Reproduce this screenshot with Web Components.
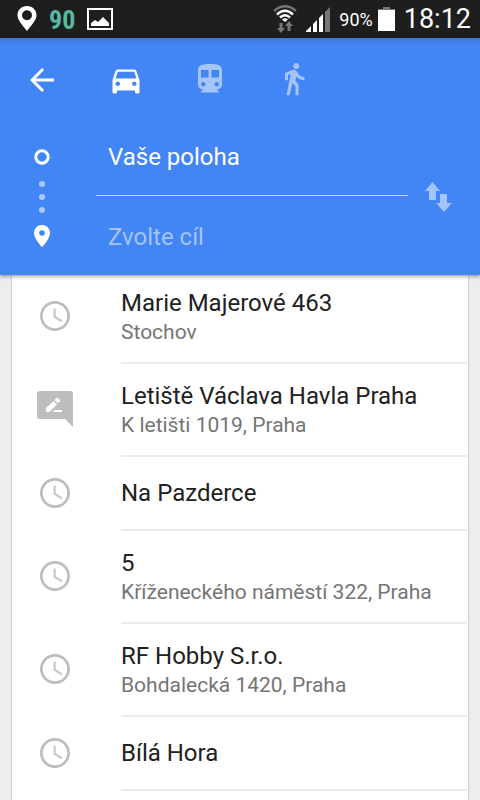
<!DOCTYPE html>
<html lang="cs">
<head>
<meta charset="utf-8">
<meta name="viewport" content="width=device-width, initial-scale=1">
<title>Trasa</title>
<style>
  html, body { margin: 0; }
  body { font-family: Roboto, "Noto Sans", sans-serif; background: #ededed; color: #212121; }
</style>
</head>
<body>
<directions-app></directions-app>
<script>
const ICONS = {
  back: ['0 0 24 24', '<path d="M20 11H7.830l5.590-5.590L12 4l-8 8 8 8 1.410-1.410L7.830 13H20v-2z"/>'],
  car: ['0 0 24 24', '<path d="M18.920 6.010C18.720 5.420 18.160 5 17.500 5h-11c-.66 0-1.210.42-1.420 1.010L3 12v8c0 .55.45 1 1 1h1c.55 0 1-.45 1-1v-1h12v1c0 .55.45 1 1 1h1c.55 0 1-.45 1-1v-8l-2.080-5.990zM6.500 16c-.83 0-1.500-.67-1.500-1.500S5.670 13 6.500 13s1.500.67 1.500 1.500S7.330 16 6.500 16zm11 0c-.83 0-1.500-.67-1.500-1.500s.67-1.500 1.500-1.500 1.500.67 1.500 1.500-.67 1.500-1.500 1.500zM5 11l1.500-4.500h11L19 11H5z"/>'],
  train: ['0 .7 24 24', '<path d="M12 2c-4.420 0-8 .5-8 4v9.500C4 17.430 5.570 19 7.500 19L6 20.500v.5h12v-.5L16.500 19c1.930 0 3.500-1.570 3.500-3.500V6c0-3.500-3.580-4-8-4zM7.500 17c-.83 0-1.500-.67-1.500-1.500S6.670 14 7.500 14s1.500.67 1.500 1.500S8.330 17 7.500 17zm3.500-6H6V6h5v5zm5.500 6c-.83 0-1.500-.67-1.500-1.500s.67-1.500 1.500-1.500 1.500.67 1.500 1.500-.67 1.500-1.500 1.500zm1.500-6h-5V6h5v5z"/>'],
  walk: ['0 .9 24 24', '<path d="M13.500 5.500c1.100 0 2-.9 2-2s-.9-2-2-2-2 .9-2 2 .9 2 2 2zM9.800 8.900L7 23h2.100l1.800-8 2.100 2v6h2v-7.500l-2.100-2 .6-3C14.800 12 16.800 13 19 13v-2c-1.900 0-3.500-1-4.300-2.400l-1-1.600c-.4-.6-1-1-1.700-1-.3 0-.5.1-.8.1L6 8.300V13h2V9.600l1.800-.7"/>'],
  clock: ['0 0 24 24', '<path d="M11.990 2C6.470 2 2 6.480 2 12s4.470 10 9.990 10C17.520 22 22 17.520 22 12S17.520 2 11.990 2zM12 20.200c-4.530 0-8.200-3.670-8.200-8.200S7.470 3.800 12 3.800s8.200 3.670 8.200 8.200-3.670 8.200-8.200 8.200z"/><path opacity=".8" d="M12.500 7H11v6l5.200 3.100.8-1.200-4.500-2.700z"/>'],
  note: ['0 0 36 36', '<path fill-rule="evenodd" d="M3 0h30a3 3 0 0 1 3 3v33l-8-8H3a3 3 0 0 1-3-3V3a3 3 0 0 1 3-3zM9 17v4h3.500L20 13.500 16.500 10zM17.500 9l3.500 3.500 2-2a1 1 0 0 0 0-1.400L21 7a1 1 0 0 0-1.500 0zM17.500 19l-2 2H25v-2z"/>'],
  swap: ['0 0 36 36', '<path d="M12.500 3L20 12h-4v9H9v-9H5zM20 15h7v9h5l-8 9-8-9h4z"/>'],
  route: ['0 0 36 108', '<circle cx="18" cy="14" r="6.200" fill="none" stroke="currentColor" stroke-width="3"/><g opacity=".55"><circle cx="18" cy="41" r="3"/><circle cx="18" cy="54" r="3"/><circle cx="18" cy="67" r="3"/></g><path fill-rule="evenodd" d="M18 82c-4.400 0-8 3.500-8 7.900 0 5.900 8 14.100 8 14.100s8-8.200 8-14.100c0-4.400-3.600-7.900-8-7.900zm0 5.200a2.800 2.800 0 1 1 0 5.600 2.800 2.800 0 0 1 0-5.600z"/>'],
  place: ['0 0 20 26', '<path fill-rule="evenodd" d="M10 0C4.500 0 .5 4 .5 9.300.5 14.500 6 19.500 10 25c4-5.500 9.500-10.500 9.500-15.700C19.500 4 15.500 0 10 0zm0 4.300a5 5 0 1 1 0 10 5 5 0 0 1 0-10z"/>'],
  picture: ['0 0 26 22', '<path fill-rule="evenodd" d="M0 0h26v22H0zM2 2v18h22V2zM4 18v-3l4-3 3 2 5-5 6 6v3z"/>'],
  wifi: ['0 0 24 28', '<g fill="none" stroke="currentColor"><path d="M1 6Q12-3.500 23 6" stroke="#777" stroke-width="2.200"/><path d="M4 9.500Q12 2 20 9.500M7 12.500Q12 8 17 12.500" stroke-width="2.400"/></g><path d="M9 14.500q3-2.500 6 0l-3 2.500z"/><path fill="#777" d="M6.500 18h3v5H12l-4 5-4-5h2.500zM16 16l4 5h-2.500v5h-3v-5H12z"/>'],
  signal: ['0 0 24 25', '<path d="M0 25v-1l5-5v6zM7 25v-8l4-4v12zM13 25V11l4-4v18z"/><path fill="#777" d="M19 25V5l5-5v25z"/>'],
  battery: ['0 0 17 24', '<path fill="#777" d="M5 0h7v2h5v2H0V2h5z"/><path d="M0 3h17v21H0z"/>']
};

const define = (name, html, setup) => {
  const template = document.createElement('template');
  template.innerHTML = html;
  customElements.define(name, class extends HTMLElement {
    constructor() {
      super();
      this.attachShadow({ mode: 'open' }).append(template.content.cloneNode(true));
    }
    connectedCallback() { if (setup) setup(this, this.shadowRoot); }
  });
};

define('map-icon', `<style>
  :host { display: block; flex: none; width: 36px; height: 36px; }
  svg { display: block; width: 100%; height: 100%; fill: currentColor; }
</style><svg aria-hidden="true"></svg>`, (el, root) => {
  const [box, shape] = ICONS[el.getAttribute('name')];
  const svg = root.querySelector('svg');
  svg.setAttribute('viewBox', box);
  svg.innerHTML = shape;
});

define('status-bar', `<style>
  :host { display: flex; align-items: center; justify-content: space-between; box-sizing: border-box;
    height: 38px; padding: 0 9px 0 17px; background: #1e1e1e; color: #fff; }
  div { display: flex; align-items: center; }
  .left { gap: 12px; }
  .right { gap: 5px; }
  .place { width: 20px; height: 26px; }
  .count { font: 700 26px/36px "Roboto Condensed", "Liberation Sans Narrow", Roboto, sans-serif; padding-top: 2px; color: #56b9a2; }
  .picture { width: 26px; height: 22px; }
  .wifi { width: 24px; height: 28px; margin-right: 4px; }
  .signal { width: 24px; height: 25px; margin-right: 4px; }
  .level { font-size: 18px; line-height: 38px; padding-top: 2px; }
  .battery { width: 17px; height: 24px; margin-right: 4px; }
  time { font-size: 27px; line-height: 38px; }
</style>
<div class="left"><map-icon class="place" name="place"></map-icon><span class="count">90</span><map-icon class="picture" name="picture"></map-icon></div>
<div class="right"><map-icon class="wifi" name="wifi"></map-icon><map-icon class="signal" name="signal"></map-icon><span class="level">90%</span><map-icon class="battery" name="battery"></map-icon><time>18:12</time></div>`);

define('icon-button', `<style>
  :host { display: block; flex: none; }
  button { display: grid; place-items: center; width: 84px; height: 72px; margin: 0; padding: 0;
    border: 0; background: none; color: inherit; cursor: pointer; }
</style><button type="button"></button>`, (el, root) => {
  const button = root.querySelector('button');
  button.setAttribute('aria-label', el.getAttribute('label'));
  const icon = document.createElement('map-icon');
  icon.setAttribute('name', el.getAttribute('icon'));
  button.replaceChildren(icon);
});

define('route-field', `<style>
  :host { display: block; }
  input { display: block; box-sizing: border-box; width: 100%; height: 77px; margin: 0; padding: 0 12px;
    border: 0; outline: 0; background: none; color: #fff; font: inherit; font-size: 24px; }
  input::placeholder { color: #a4c4fa; opacity: 1; }
</style><input type="text">`, (el, root) => {
  const input = root.querySelector('input');
  input.setAttribute('aria-label', el.getAttribute('label'));
  input.placeholder = el.getAttribute('placeholder') || '';
  input.value = el.getAttribute('value') || '';
});

define('directions-header', `<style>
  :host { display: block; position: relative; z-index: 1; color: #fff;
    background: linear-gradient(#3d79dc, #4285f4 8px); box-shadow: 0 1px 4px rgba(0,0,0,.45); }
  nav { display: flex; height: 76px; align-items: center; padding-top: 4px; }
  .off { color: #a4c4fa; }
  .route { display: grid; grid-template-columns: 96px minmax(0, 1fr) 60px; padding-right: 12px; align-items: center; height: 157px; }
  .rail { width: 36px; height: 108px; margin-left: 24px; }
  .from { border-bottom: 1px solid #c6dafb; }
  .to { padding-top: 2px; }
  .swap { color: #a4c4fa; margin: 0 -12px; }
</style>
<nav aria-label="Způsob dopravy">
  <icon-button icon="back" label="Zpět"></icon-button>
  <icon-button icon="car" label="Autem"></icon-button>
  <icon-button class="off" icon="train" label="Veřejnou dopravou"></icon-button>
  <icon-button class="off" icon="walk" label="Pěšky"></icon-button>
</nav>
<div class="route">
  <map-icon class="rail" name="route"></map-icon>
  <div>
    <route-field class="from" label="Výchozí místo" value="Vaše poloha"></route-field>
    <route-field class="to" label="Cíl" placeholder="Zvolte cíl"></route-field>
  </div>
  <icon-button class="swap" icon="swap" label="Prohodit"></icon-button>
</div>`);

define('place-row', `<style>
  :host { display: block; }
  button { display: flex; align-items: center; width: 100%; margin: 0; padding: 0 1px 0 25px; border: 0;
    background: none; color: inherit; font: inherit; text-align: left; cursor: pointer; }
  map-icon { color: #bdbdbd; margin-bottom: 3px; }
  .text { flex: 1; min-width: 0; margin-left: 48px; padding: 21px 0; border-bottom: 2px solid #ebebeb; }
  .text.two { padding: 17px 0 16px; }
  .name, .address { display: block; white-space: nowrap; overflow: hidden; text-overflow: ellipsis; }
  .name { font-size: 24px; line-height: 30px; }
  .address { font-size: 21px; line-height: 28px; color: #757575; }
  .text:not(.two) .address { display: none; }
</style>
<button type="button"><span class="text"><span class="name"><slot></slot></span><span class="address"><slot name="address"></slot></span></span></button>`, (el, root) => {
  if (root.querySelector('map-icon')) return;
  const icon = document.createElement('map-icon');
  icon.setAttribute('name', el.getAttribute('icon') || 'clock');
  root.querySelector('button').prepend(icon);
  root.querySelector('.text').classList.toggle('two', !!el.querySelector('[slot=address]'));
});

define('place-list', `<style>
  :host { display: block; flex: 1; margin: -4px 12px 0; background: #fff; box-shadow: 0 0 2px rgba(0,0,0,.3); }
</style><slot></slot>`, el => el.setAttribute('role', 'list'));

define('directions-app', `<style>
  :host { display: flex; flex-direction: column; min-height: 100vh; }
</style>
<status-bar></status-bar>
<directions-header></directions-header>
<place-list>
  <place-row role="listitem">Marie Majerové 463<span slot="address">Stochov</span></place-row>
  <place-row role="listitem" icon="note">Letiště Václava Havla Praha<span slot="address">K letišti 1019, Praha</span></place-row>
  <place-row role="listitem">Na Pazderce</place-row>
  <place-row role="listitem">5<span slot="address">Kříženeckého náměstí 322, Praha</span></place-row>
  <place-row role="listitem">RF Hobby S.r.o.<span slot="address">Bohdalecká 1420, Praha</span></place-row>
  <place-row role="listitem">Bílá Hora</place-row>
</place-list>`);
</script>
</body>
</html>
